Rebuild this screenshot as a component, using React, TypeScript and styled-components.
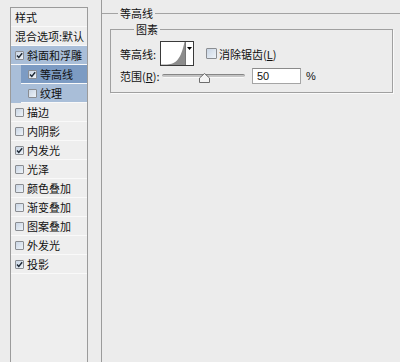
import React from "react";
import styled, { createGlobalStyle } from "styled-components";

const Global = createGlobalStyle`
  html, body { margin: 0; padding: 0; background: #ececec; }
  body {
    font-family: "Noto Sans CJK SC", "Noto Sans", sans-serif;
    font-size: 11px;
    color: #111;
  }
`;

const Page = styled.div`
  display: flex;
  width: 400px;
  height: 362px;
  overflow: hidden;
  background: #ececec;
`;

const Sidebar = styled.div`
  width: 88px;
  flex: none;
  box-sizing: border-box;
  padding: 7px 0 0 10px;
  display: flex;
`;

const List = styled.div`
  flex: 1;
  border: 1px solid #9b9b9b;
  border-bottom: none;
  background: #eeeeee;
  display: flex;
  flex-direction: column;
`;

const Row = styled.div<{ $indent?: boolean; $active?: boolean }>`
  height: 18px;
  border-bottom: 1px solid #f9f9f9;
  display: flex;
  align-items: center;
  gap: 3px;
  padding-left: ${(p) => (p.$indent ? 7 : 4)}px;
  margin-left: ${(p) => (p.$indent ? 10 : 0)}px;
  background: ${(p) => (p.$active ? "#7c9bc3" : "transparent")};
  white-space: nowrap;
  overflow: hidden;
  line-height: 18px;
`;

const Group = styled.div`
  background: #a9bed8;
`;

const Box = styled.span<{ $size?: number }>`
  width: ${(p) => p.$size ?? 7}px;
  height: ${(p) => p.$size ?? 7}px;
  flex: none;
  border: 1px solid #8a8d92;
  border-radius: 1px;
  background: linear-gradient(135deg, #c9d5e4 0%, #eef3f8 100%);
  display: inline-flex;
  align-items: center;
  justify-content: center;
  position: relative;
`;

const Check: React.FC<{ checked?: boolean; size?: number }> = ({ checked, size }) => (
  <Box $size={size}>
    {checked && (
      <svg width="9" height="9" viewBox="0 0 9 9" style={{ position: "absolute", left: -1, top: -1 }}>
        <path d="M2 4.5 L3.8 6.5 L7.2 2.2" stroke="#1c2733" strokeWidth="1.4" fill="none" />
      </svg>
    )}
  </Box>
);

const Main = styled.div`
  flex: 1;
  margin-left: 13px;
  border-left: 1px solid #9b9b9b;
  padding-top: 6px;
  display: flex;
  flex-direction: column;
`;

const OuterSet = styled.fieldset`
  margin: 0;
  padding: 0;
  border: none;
  border-top: 1px solid #a3a3a3;
  min-width: 0;
`;

const Legend = styled.legend<{ $offset: number }>`
  margin-left: ${(p) => p.$offset}px;
  padding: 0 2px;
  line-height: 14px;
  font-size: 11px;
`;

const InnerSet = styled.fieldset`
  margin: 2px 7px 0 8px;
  padding: 5px 0 8px 9px;
  border: 1px solid #a0a0a0;
  box-shadow: 1px 1px 0 #fafafa;
  min-width: 0;
`;

const Grid = styled.div`
  display: grid;
  grid-template-columns: 40px 1fr;
  grid-template-rows: 25px 16px;
  row-gap: 2px;
  align-items: center;
`;

const Label = styled.span`
  white-space: nowrap;
`;

const Line = styled.div`
  display: flex;
  align-items: center;
`;

const Preview = styled.div`
  width: 32px;
  height: 23px;
  border: 1px solid #3a3a3a;
  background: #fff;
  display: flex;
`;

const PreviewArt = styled.div`
  width: 24px;
  height: 23px;
  border-right: 1px solid #777;
`;

const Arrow = styled.div`
  flex: 1;
  display: flex;
  justify-content: center;
  padding-top: 5px;
`;

const AntiAlias = styled.label`
  margin-left: 12px;
  display: flex;
  align-items: center;
  gap: 2px;
`;

const U = styled.span`
  text-decoration: underline;
`;

const SliderWrap = styled.div`
  position: relative;
  width: 83px;
  height: 16px;
  margin-left: 2px;
  display: flex;
  align-items: center;
`;

const Track = styled.div`
  width: 100%;
  height: 2px;
  border-radius: 2px;
  background: #c4c4c4;
  border-top: 1px solid #858585;
  border-bottom: 1px solid #f8f8f8;
`;

const Thumb = styled.svg`
  position: absolute;
  top: 5px;
`;

const Input = styled.div`
  margin-left: 7px;
  width: 43px;
  height: 14px;
  border: 1px solid #a5a5a5;
  border-top-color: #8a8a8a;
  background: #fff;
  padding-left: 4px;
  box-sizing: content-box;
  line-height: 14px;
  font-family: "Liberation Sans", "Noto Sans", sans-serif;
  font-size: 11px;
`;

const Pct = styled.span`
  margin-left: 5px;
  font-family: "Liberation Sans", sans-serif;
  font-size: 11px;
`;

const items: { label: string; checked: boolean }[] = [
  { label: "描边", checked: false },
  { label: "内阴影", checked: false },
  { label: "内发光", checked: true },
  { label: "光泽", checked: false },
  { label: "颜色叠加", checked: false },
  { label: "渐变叠加", checked: false },
  { label: "图案叠加", checked: false },
  { label: "外发光", checked: false },
  { label: "投影", checked: true },
];

export default function App() {
  const value = 50;
  return (
    <>
      <Global />
      <Page>
        <Sidebar>
          <List>
            <Row>样式</Row>
            <Row>混合选项:默认</Row>
            <Group>
              <Row>
                <Check checked />
                <span>斜面和浮雕</span>
              </Row>
              <Row $indent $active>
                <Check checked />
                <span>等高线</span>
              </Row>
              <Row $indent>
                <Check />
                <span>纹理</span>
              </Row>
            </Group>
            {items.map((it) => (
              <Row key={it.label}>
                <Check checked={it.checked} />
                <span>{it.label}</span>
              </Row>
            ))}
          </List>
        </Sidebar>
        <Main>
          <OuterSet>
            <Legend $offset={16}>等高线</Legend>
            <InnerSet>
              <Legend $offset={14}>图素</Legend>
              <Grid>
                <Label>等高线:</Label>
                <Line>
                  <Preview>
                    <PreviewArt>
                      <svg width="24" height="23" viewBox="0 0 24 23">
                        <path d="M0 22.5 L6 22.5 C15 22 20 17 23.5 0 L24 0 L24 23 L0 23 Z" fill="#8c8c8c" />
                      </svg>
                    </PreviewArt>
                    <Arrow>
                      <svg width="5" height="3" viewBox="0 0 5 3">
                        <path d="M0 0 H5 L2.5 3 Z" fill="#000" />
                      </svg>
                    </Arrow>
                  </Preview>
                  <AntiAlias>
                    <Check size={9} />
                    <span>
                      消除锯齿(<U>L</U>)
                    </span>
                  </AntiAlias>
                </Line>
                <Label>
                  范围(<U>R</U>):
                </Label>
                <Line>
                  <SliderWrap>
                    <Track />
                    <Thumb
                      width="11"
                      height="10"
                      viewBox="0 0 11 10"
                      style={{ left: `calc(${value}% - 5px)` }}
                    >
                      <path d="M5.5 0.5 L10.5 5 L10.5 9.5 L0.5 9.5 L0.5 5 Z" fill="#f4f4f4" stroke="#6d6d6d" />
                    </Thumb>
                  </SliderWrap>
                  <Input>{value}</Input>
                  <Pct>%</Pct>
                </Line>
              </Grid>
            </InnerSet>
          </OuterSet>
        </Main>
      </Page>
    </>
  );
}
